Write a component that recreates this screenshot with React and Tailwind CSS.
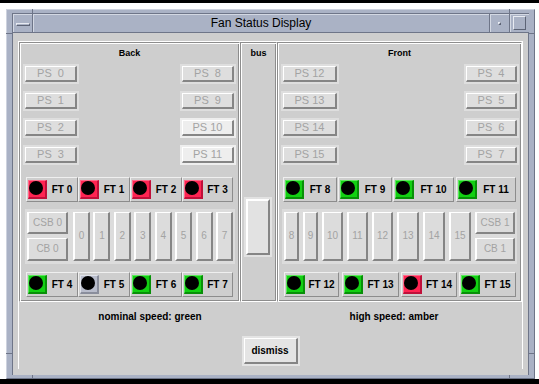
import React from "react";

const ETCH =
  "border border-t-[#8d8d8d] border-l-[#8d8d8d] border-r-white border-b-white shadow-[inset_1px_1px_0_#ffffff,inset_-1px_-1px_0_#8d8d8d]";

function PS({ label, w, bright }) {
  return (
    <div className={`p-[2px] ${bright ? "bg-[#eeeeee]" : "bg-[#dedede]"}`}>
      <div
        className={`${w} h-[16px] border-t border-l border-t-white border-l-white border-r-2 border-b-2 border-r-[#858585] border-b-[#858585] flex items-center justify-center text-[11px] leading-none text-[#a3a3a3] whitespace-pre`}
      >
        {label}
      </div>
    </div>
  );
}

function PSCol({ labels, w, bright = [] }) {
  return (
    <div className="flex flex-col gap-[7px]">
      {labels.map((l) => (
        <PS key={l} label={l} w={w} bright={bright.includes(l)} />
      ))}
    </div>
  );
}

const LED = {
  red: "bg-[#ff2452] border-t-[#ff6a8a] border-l-[#ff6a8a] border-r-[#c0103a] border-b-[#c0103a]",
  green: "bg-[#12d012] border-t-[#5ee85e] border-l-[#5ee85e] border-r-[#089008] border-b-[#089008]",
  gray: "bg-[#b8bccb] border-t-[#dfe2ea] border-l-[#dfe2ea] border-r-[#8a8e9c] border-b-[#8a8e9c]",
};

function Led({ c }) {
  return (
    <div className={`w-[19px] h-[19px] shrink-0 border-t border-l border-r-2 border-b-2 ${LED[c]}`}>
      <div className="w-[14px] h-[14px] rounded-full bg-black" />
    </div>
  );
}

function FT({ label, c, w, extra = "" }) {
  return (
    <div
      className={`${w} ${extra} h-[25px] shrink-0 flex items-center pl-[1px] border-t border-l border-t-[#efefef] border-l-[#efefef] border-r border-b border-r-[#8c8c8c] border-b-[#8c8c8c]`}
    >
      <Led c={c} />
      <span className="flex-1 text-center text-[10px] font-bold leading-none text-black whitespace-pre">
        {label}
      </span>
    </div>
  );
}

function Slot({ label, w, h = "h-[49px]", extra = "" }) {
  return (
    <div
      className={`${w} ${h} ${extra} shrink-0 border-t border-l-2 border-t-white border-l-white border-r-2 border-b-2 border-r-[#858585] border-b-[#858585] flex items-center justify-center text-[10px] leading-none text-[#a3a3a3] whitespace-pre`}
    >
      {label}
    </div>
  );
}

function Label({ children }) {
  return (
    <div className="h-[20px] flex items-center justify-center text-[9px] font-bold leading-none text-black">
      {children}
    </div>
  );
}

function BackPanel() {
  return (
    <div className={`w-[221px] h-full ${ETCH} flex flex-col`}>
      <Label>Back</Label>
      <div className="mt-[1px] flex justify-between pl-[3px] pr-[3px]">
        <PSCol labels={["PS  0", "PS  1", "PS  2", "PS  3"]} w="w-[52px]" />
        <PSCol labels={["PS  8", "PS  9", "PS 10", "PS 11"]} w="w-[52px]" bright={["PS 10", "PS 11"]} />
      </div>
      <div className="mt-[12px] ml-[6px] flex">
        <FT label="FT 0" c="red" w="w-[52px]" />
        <FT label="FT 1" c="red" w="w-[52px]" />
        <FT label="FT 2" c="red" w="w-[52px]" />
        <FT label="FT 3" c="red" w="w-[51px]" />
      </div>
      <div className="mt-[7px] ml-[5px] w-[210px] h-[55px] bg-[#dcdcdc] pt-[3px] pl-[2px] pr-[2px] flex">
        <div className="w-[41px] flex flex-col gap-[4px]">
          <Slot label="CSB 0" w="w-[41px]" h="h-[22px]" />
          <Slot label="CB 0" w="w-[41px]" h="h-[23px]" />
        </div>
        <div className="ml-[5px] flex-1 flex justify-between">
          {["0", "1", "2", "3", "4", "5", "6", "7"].map((s) => (
            <Slot key={s} label={s} w="w-[17px]" />
          ))}
        </div>
      </div>
      <div className="mt-[8px] ml-[6px] flex">
        <FT label="FT 4" c="green" w="w-[52px]" />
        <FT label="FT 5" c="gray" w="w-[52px]" />
        <FT label="FT 6" c="green" w="w-[52px]" />
        <FT label="FT 7" c="green" w="w-[51px]" />
      </div>
    </div>
  );
}

function BusPanel() {
  return (
    <div className={`w-[37px] h-full ${ETCH} flex flex-col`}>
      <Label>bus</Label>
      <div className="mt-[134px] ml-[3px] w-[28px] h-[60px] p-[2px] bg-[#e2e2e2]">
        <div className="w-full h-full border-t-2 border-l-2 border-t-white border-l-white border-r-2 border-b-2 border-r-[#858585] border-b-[#858585]" />
      </div>
    </div>
  );
}

function FrontPanel() {
  return (
    <div className={`w-[245px] h-full ${ETCH} flex flex-col`}>
      <Label>Front</Label>
      <div className="mt-[1px] flex justify-between pl-[3px] pr-[2px]">
        <PSCol labels={["PS 12", "PS 13", "PS 14", "PS 15"]} w="w-[54px]" />
        <PSCol labels={["PS  4", "PS  5", "PS  6", "PS  7"]} w="w-[51px]" />
      </div>
      <div className="mt-[12px] ml-[5px] flex">
        <FT label="FT 8" c="green" w="w-[54px]" />
        <FT label="FT 9" c="green" w="w-[54px]" extra="ml-[1px]" />
        <FT label="FT 10" c="green" w="w-[61px]" extra="ml-[1px]" />
        <FT label="FT 11" c="green" w="w-[60px]" extra="ml-[2px]" />
      </div>
      <div className="mt-[7px] ml-[4px] w-[235px] h-[55px] bg-[#dcdcdc] pt-[3px] pl-[2px] flex gap-[4px]">
        <Slot label="8" w="w-[15px]" />
        <Slot label="9" w="w-[15px]" />
        <Slot label="10" w="w-[21px]" />
        <Slot label="11" w="w-[21px]" />
        <Slot label="12" w="w-[21px]" />
        <Slot label="13" w="w-[22px]" />
        <Slot label="14" w="w-[22px]" />
        <Slot label="15" w="w-[22px]" />
        <div className="w-[40px] flex flex-col gap-[4px]">
          <Slot label="CSB 1" w="w-[40px]" h="h-[22px]" />
          <Slot label="CB 1" w="w-[40px]" h="h-[23px]" />
        </div>
      </div>
      <div className="mt-[8px] ml-[6px] flex">
        <FT label="FT 12" c="green" w="w-[55px]" />
        <FT label="FT 13" c="green" w="w-[57px]" extra="ml-[3px]" />
        <FT label="FT 14" c="red" w="w-[56px]" extra="ml-[2px]" />
        <FT label="FT 15" c="green" w="w-[57px]" extra="ml-[2px]" />
      </div>
    </div>
  );
}

export default function App() {
  return (
    <div
      className="w-[539px] h-[384px] bg-white overflow-hidden flex flex-col"
      style={{ fontFamily: '"Liberation Sans", Arial, Helvetica, sans-serif' }}
    >
      <div className="h-[3px] bg-black shrink-0" />
      <div className="h-[6px] shrink-0" />
      <div className="relative ml-[6px] w-[529px] h-[370px] shrink-0 bg-[#aab2c5] border border-t-[#cdd2de] border-l-[#cdd2de] border-r-[#6e7588] border-b-[#6e7588] pt-[3px] pl-[5px] pr-[5px] pb-[3px]">
        <div className="w-full h-full flex flex-col border-l border-[#6e7588]">
          {/* title bar */}
          <div className="h-[20px] shrink-0 flex bg-[#aab2c5] border-t border-b border-[#6e7588]">
            <div className="w-[20px] border-r border-[#6e7588] shadow-[inset_1px_1px_0_#d3d8e3] flex justify-center pt-[9px]">
              <div className="w-[14px] h-[3px] border-t border-l border-t-[#e8ebf2] border-l-[#e8ebf2] border-b border-r border-b-[#5d6476] border-r-[#5d6476]" />
            </div>
            <div className="flex-1 flex items-center justify-center text-[12px] leading-none text-black shadow-[inset_1px_1px_0_#d3d8e3]">
              Fan Status Display
            </div>
            <div className="w-[20px] border-l border-[#6e7588] shadow-[inset_1px_1px_0_#d3d8e3] flex items-center justify-center">
              <div className="w-[3px] h-[3px] border-t border-l border-t-[#e8ebf2] border-l-[#e8ebf2] border-b border-r border-b-[#5d6476] border-r-[#5d6476]" />
            </div>
            <div className="w-[20px] border-l border-[#6e7588] shadow-[inset_1px_1px_0_#d3d8e3] flex items-center justify-center">
              <div className="w-[13px] h-[14px] border border-t-[#e8ebf2] border-l-[#e8ebf2] border-b-[#5d6476] border-r-[#5d6476]" />
            </div>
          </div>
          {/* content */}
          <div className="flex-1 bg-[#cecece] pl-[5px] pt-[8px] border-r border-[#6e7588]">
            <div className="w-[505px] h-[328px] border-l border-t border-r border-white flex flex-col">
              <div className="flex h-[260px] shrink-0">
                <BackPanel />
                <BusPanel />
                <FrontPanel />
              </div>
              <div className="mt-[8px] h-[14px] flex items-center text-[10px] font-bold leading-none text-black">
                <div className="w-[262px] text-center">nominal speed: green</div>
                <div className="w-[226px] text-center">high speed: amber</div>
              </div>
              <div className="mt-[12px] flex justify-center">
                <div className="p-[2px] bg-[#e4e4e4]">
                  <div className="w-[54px] h-[26px] border-t border-l border-t-white border-l-white border-r-2 border-b-2 border-r-[#858585] border-b-[#858585] flex items-center justify-center text-[10px] font-bold leading-none text-black">
                    dismiss
                  </div>
                </div>
              </div>
            </div>
          </div>
        </div>
        {/* resize handle notches */}
        <div className="absolute left-[25px] top-[-1px] w-[1px] h-[4px] bg-[#6e7588]" />
        <div className="absolute left-[502px] top-[-1px] w-[1px] h-[4px] bg-[#6e7588]" />
        <div className="absolute left-[25px] bottom-[-1px] w-[1px] h-[4px] bg-[#6e7588]" />
        <div className="absolute left-[502px] bottom-[-1px] w-[1px] h-[4px] bg-[#6e7588]" />
        <div className="absolute left-[-1px] top-[23px] w-[6px] h-[1px] bg-[#6e7588]" />
        <div className="absolute right-[-1px] top-[23px] w-[6px] h-[1px] bg-[#6e7588]" />
        <div className="absolute left-[-1px] bottom-[24px] w-[6px] h-[1px] bg-[#6e7588]" />
        <div className="absolute right-[-1px] bottom-[24px] w-[6px] h-[1px] bg-[#6e7588]" />
      </div>
      <div className="flex-1 bg-black" />
    </div>
  );
}
